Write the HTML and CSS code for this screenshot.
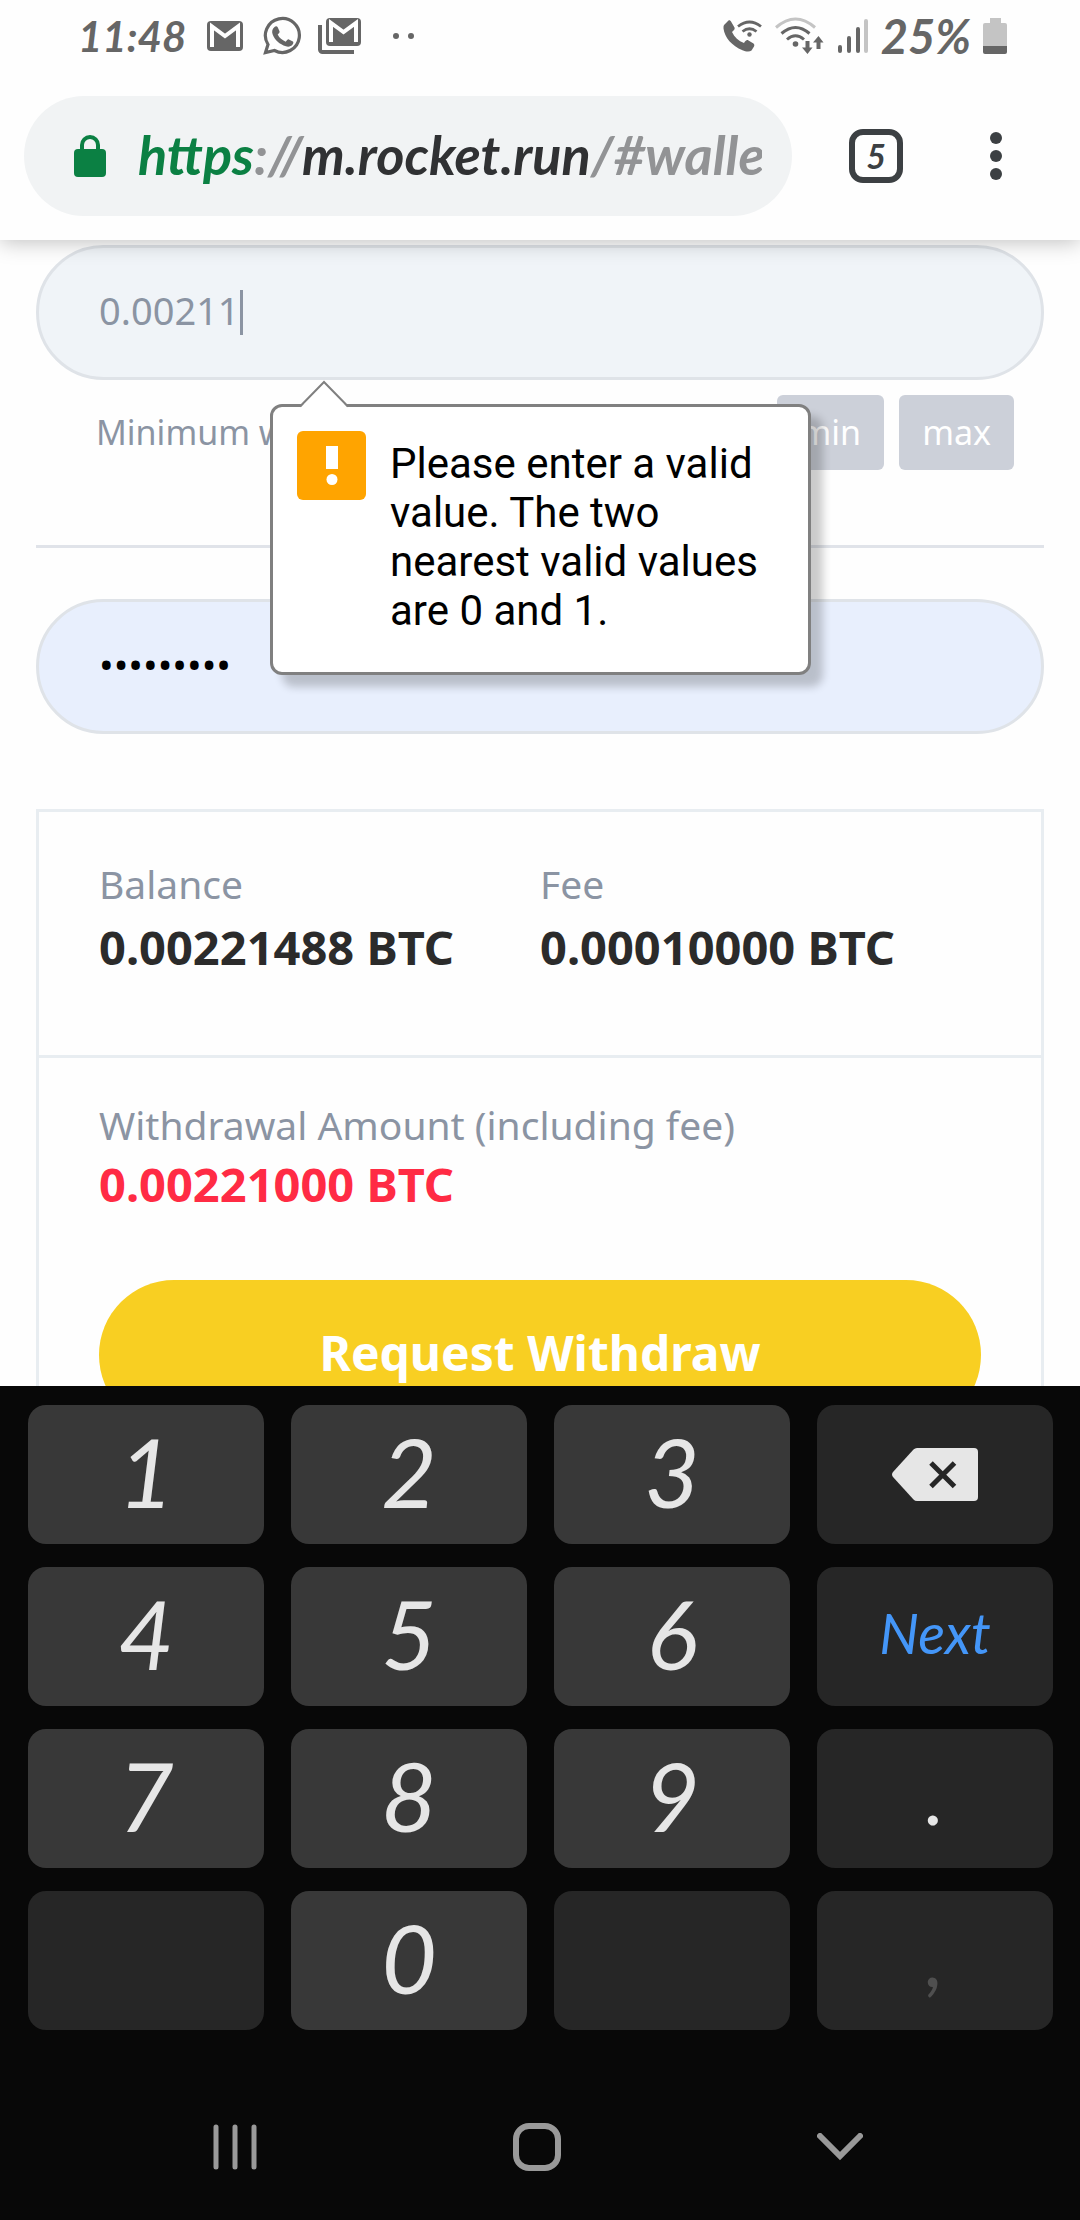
FILE: index.html
```html
<!DOCTYPE html>
<html lang="en">
<head>
<meta charset="utf-8">
<meta name="viewport" content="width=device-width, initial-scale=1">
<title>Wallet – Withdraw</title>
<link rel="stylesheet" href="styles.css">
</head>
<body>
<header class="top">
  <div class="status">
    <div class="status-left">
      <span class="clock">11:48</span>
      <svg class="icon-mail" width="36" height="30" viewBox="0 0 36 30"><rect width="36" height="30" rx="4" fill="#666"/><path d="M5 26V5.500L18 15 31 5.500V26" fill="none" stroke="#fff" stroke-width="4"/></svg>
      <svg class="icon-chat" width="40" height="40" viewBox="0 0 40 40"><path d="M3.500 36.500 6 28.500A17 17 0 1 1 12.500 34.500Z" fill="none" stroke="#666" stroke-width="3.200"/><path d="M12.500 11c1-.8 2.500-1 3.200.3l1.800 4c.3 1-.2 1.700-1.800 3.300 1.700 3.500 4.400 5.600 8 7.100 1.500-1.800 2-2.700 3.200-2.300l4 2c.8.5.5 2-.3 3.200-1.500 2-4.300 2.500-6.700 1.700C17.500 28.200 13 24.500 10.600 18.300c-1-2.800-.3-5.700 1.900-7.300Z" fill="#666"/></svg>
      <svg class="icon-mails" width="43" height="36" viewBox="0 0 43 36"><path d="M2 7v24.500a2.500 2.500 0 0 0 2.500 2.500H36" fill="none" stroke="#666" stroke-width="4"/><rect x="8" width="35" height="28" rx="4" fill="#666"/><path d="M13 24V5l12.500 9L38 5v19" fill="none" stroke="#fff" stroke-width="4"/></svg>
      <svg class="icon-more" width="22" height="6" viewBox="0 0 22 6"><circle cx="3" cy="3" r="3" fill="#666"/><circle cx="18" cy="3" r="3" fill="#666"/></svg>
    </div>
    <div class="status-right">
      <svg width="40" height="34" viewBox="0 0 40 34"><path d="M1 6 5.500 1.500c1-.8 2 0 2.500 1l3.500 6c.5 1.500 0 2-2.500 4.500 2.500 5.500 6.500 9 12 11 2-3 3-3.500 4.500-2.500l5 3c1 1 1 2 .5 3l-2.500 4c-2 1.500-6 1-9-.3C9 27 1.500 18.500.5 9.500Q.3 7 1 6Z" fill="#666"/><g fill="none" stroke="#666" stroke-width="2.800"><path d="M15 7.500q11.500-9 23 0M19.500 12.500q7-5.500 14 0"/></g><circle cx="26.500" cy="15.500" r="2.200" fill="#666"/></svg>
      <svg width="50" height="38" viewBox="0 0 50 38"><g fill="none" stroke-width="3"><path d="M1 10.500q19.500-17 39 0" stroke="#c4c4c4"/><path d="M6.500 16.500q14-12 28 0M12 22.500q8.500-7.500 17 0" stroke="#666"/></g><circle cx="20.500" cy="27" r="2.800" fill="#666"/><path d="M30.500 24h4v6.500h3L32.500 37 27 30.500h3.500ZM41.500 32h4v-6.500h3L43.500 19 38 25.500h3.500Z" fill="#666"/></svg>
      <svg width="32" height="36" viewBox="0 0 32 36"><g stroke-width="4" stroke-linecap="round" stroke="#666"><path d="M3 29v4M12 20v13M21 11v22"/><path d="M29 3v30" stroke="#c4c4c4"/></g></svg>
      <span class="percent">25%</span>
      <svg width="24" height="36" viewBox="0 0 24 36"><path d="M7 0h11v5h4a2 2 0 0 1 2 2v21H0V7a2 2 0 0 1 2-2h5Z" fill="#c4c4c4"/><path d="M0 28h24v6a2 2 0 0 1-2 2H2a2 2 0 0 1-2-2Z" fill="#666"/></svg>
    </div>
  </div>
  <div class="toolbar">
    <a class="address" href="#wallet">
      <svg width="32" height="42" viewBox="0 0 32 42"><rect y="14" width="32" height="28" rx="4" fill="#0b8043"/><path d="M8 16v-6a8 8 0 0 1 16 0v6" fill="none" stroke="#0b8043" stroke-width="4"/></svg>
      <span class="url"><span class="scheme">https</span>://<span class="host">m.rocket.run</span>/#wallet</span>
    </a>
    <button class="tabs" type="button" aria-label="Open tabs">5</button>
    <button class="menu" type="button" aria-label="Menu"><svg width="12" height="48" viewBox="0 0 12 48"><g fill="#3c4043"><circle cx="6" cy="6" r="6"/><circle cx="6" cy="24" r="6"/><circle cx="6" cy="42" r="6"/></g></svg></button>
  </div>
</header>

<main class="page">
  <div class="amount">
    <div class="field">
      <input class="field-input amount-input" type="text" inputmode="decimal" value="0.00211" aria-label="Amount"><span class="caret"></span>
    </div>
    <div class="limits">
      <span class="hint">Minimum withdrawal</span>
      <button class="chip" type="button">min</button>
      <button class="chip" type="button">max</button>
    </div>
    <div class="bubble" role="alert">
      <svg class="bubble-arrow" width="50" height="28" viewBox="0 0 50 28"><path d="M1 28 25 2l24 26Z" fill="#fff"/><path d="M1 26.500 25 2l24 24.500" fill="none" stroke="#808080" stroke-width="2"/></svg>
      <svg class="bubble-icon" width="69" height="69" viewBox="0 0 69 69"><rect width="69" height="69" rx="6" fill="#ffa400"/><path d="M29 15h12v23H29Z" fill="#fff"/><circle cx="35" cy="48.500" r="5.500" fill="#fff"/></svg>
      <p class="bubble-text">Please enter a valid value. The two nearest valid values are 0 and 1.</p>
    </div>
  </div>
  <hr class="rule">
  <div class="field field-filled">
    <input class="field-input password" type="password" value="password1" aria-label="Password">
  </div>
  <section class="card">
    <dl class="card-row">
      <div><dt class="label">Balance</dt><dd class="value">0.00221488 BTC</dd></div>
      <div><dt class="label">Fee</dt><dd class="value">0.00010000 BTC</dd></div>
    </dl>
    <div class="card-total">
      <div class="label">Withdrawal Amount (including fee)</div>
      <div class="value value-alert">0.00221000 BTC</div>
      <button class="submit" type="button">Request Withdraw</button>
    </div>
  </section>
</main>

<footer class="dock">
  <div class="keypad">
    <button class="key" type="button">1</button>
    <button class="key" type="button">2</button>
    <button class="key" type="button">3</button>
    <button class="key key-dark key-icon" type="button" aria-label="Backspace"><svg width="86" height="53" viewBox="0 0 86 53"><path d="M25 0h57a4 4 0 0 1 4 4v45a4 4 0 0 1-4 4H25q-2 0-3.500-1.500L1 29q-2-2.500 0-5L21.500 1.500Q23 0 25 0Z" fill="#e6e6e6"/><path d="m39 15 23.500 23.500m0-23.500L39 38.500" stroke="#262626" stroke-width="5"/></svg></button>
    <button class="key" type="button">4</button>
    <button class="key" type="button">5</button>
    <button class="key" type="button">6</button>
    <button class="key key-dark key-next" type="button">Next</button>
    <button class="key" type="button">7</button>
    <button class="key" type="button">8</button>
    <button class="key" type="button">9</button>
    <button class="key key-dark key-sign" type="button">.</button>
    <button class="key key-dark" type="button" aria-label="Blank"></button>
    <button class="key" type="button">0</button>
    <button class="key key-dark" type="button" aria-label="Blank"></button>
    <button class="key key-dark key-sign key-off" type="button" disabled>,</button>
  </div>
  <nav class="nav">
    <button class="nav-button" type="button" aria-label="Recent apps"><svg width="44" height="46" viewBox="0 0 44 46"><path d="M3 3v40M22 3v40M41 3v40" stroke="#999" stroke-width="5" stroke-linecap="round"/></svg></button>
    <button class="nav-button" type="button" aria-label="Home"><svg width="48" height="48" viewBox="0 0 48 48"><rect x="3" y="3" width="42" height="42" rx="13" fill="none" stroke="#999" stroke-width="6"/></svg></button>
    <button class="nav-button" type="button" aria-label="Hide keyboard"><svg width="46" height="28" viewBox="0 0 46 28"><path d="m3 3 20 20L43 3" fill="none" stroke="#999" stroke-width="6" stroke-linecap="round"/></svg></button>
  </nav>
</footer>
</body>
</html>
```
FILE: styles.css
```css
* { box-sizing: border-box; }

body {
  margin: 0;
  height: 100vh;
  display: flex;
  flex-direction: column;
  overflow: hidden;
  background: #fefefe;
  font-family: "Noto Sans", sans-serif;
}

button {
  border: 0;
  padding: 0;
  background: none;
  font: inherit;
}

svg { display: block; flex: none; }

/* Status bar and browser toolbar */
.top {
  flex: none;
  position: relative;
  z-index: 2;
  background: #fefefe;
  box-shadow: 0 2px 20px rgba(0, 0, 0, .25);
  font-family: Lato, sans-serif;
  font-style: italic;
}

.status {
  height: 72px;
  padding: 0 73px 0 78px;
  display: flex;
  justify-content: space-between;
  color: #666;
  font-size: 42px;
  font-weight: bold;
  line-height: 72px;
}

.status-left, .status-right { display: flex; align-items: center; }
.status-right { gap: 12px; }
.clock { margin-right: 21px; }
.percent { font-size: 47px; }
.icon-mail { margin-right: 19px; }
.icon-chat { margin-right: 16px; }
.icon-mails { margin-right: 32px; }

.toolbar {
  height: 168px;
  padding: 24px 60px 24px 24px;
  display: flex;
  align-items: center;
}

.address {
  flex: 1;
  min-width: 0;
  height: 120px;
  padding: 0 30px 0 50px;
  display: flex;
  align-items: center;
  gap: 32px;
  border-radius: 60px;
  background: #f1f3f4;
  color: #929395;
  font-size: 54px;
  font-weight: bold;
  text-decoration: none;
}

.url { flex: 1; overflow: hidden; white-space: nowrap; padding-bottom: 4px; }
.scheme { color: #0b8043; }
.host { color: #303133; }

.tabs {
  width: 54px;
  height: 54px;
  margin-left: 57px;
  border: 6px solid #3c4043;
  border-radius: 14px;
  color: #3c4043;
  font-size: 34px;
  font-weight: bold;
  line-height: 40px;
}

.menu { width: 48px; margin-left: 69px; display: flex; justify-content: center; }

/* Withdraw form */
.page {
  flex: 1;
  min-height: 0;
  overflow: hidden;
  padding: 5px 36px 0;
}

.amount { position: relative; }

.field {
  height: 135px;
  padding: 0 60px;
  display: flex;
  align-items: center;
  border: 3px solid #dfe3e8;
  border-radius: 68px;
  background: #f0f4f8;
}

.field-filled { background: #e8effd; }

.field-input {
  border: 0;
  padding: 0 0 6px;
  outline: 0;
  background: none;
  color: #8b94a3;
  font: 38px/52px "Noto Sans", sans-serif;
}

.amount-input { field-sizing: content; }
.password { flex: 1; color: #000; font-size: 39px; }
.caret { width: 3px; height: 45px; background: #8b94a3; }

.limits {
  margin-top: 15px;
  padding: 0 30px 0 60px;
  display: flex;
  align-items: center;
  gap: 15px;
  font-size: 34px;
}

.hint { flex: 1; padding-bottom: 2px; color: #8b94a3; }

.chip {
  height: 75px;
  padding: 0 23px 2px;
  border-radius: 6px;
  background: #ccd0d9;
  color: #fff;
}

.bubble {
  position: absolute;
  top: 159px;
  left: 234px;
  width: 541px;
  padding: 24px;
  display: flex;
  gap: 24px;
  border: 3px solid #808080;
  border-radius: 12px;
  background: #fff;
  box-shadow: 12px 12px 8px rgba(0, 0, 0, .2);
}

.bubble-arrow { position: absolute; top: -27px; left: 26px; }

.bubble-text {
  margin: 8px 0 13px;
  color: #000;
  font: 42px/49px Roboto, sans-serif;
}

.rule { margin: 75px 0 51px; border: 0; height: 3px; background: #e0e3e9; }

.card { margin-top: 75px; border: 3px solid #e8edf1; }

.card-row {
  margin: 0;
  padding: 44px 60px 76px;
  display: grid;
  grid-template-columns: 1fr 1fr;
  border-bottom: 3px solid #e8edf1;
}

.label { color: #8b94a3; font-size: 39px; line-height: 55px; }

.value {
  margin: 0;
  color: #2b2b2b;
  font-size: 47px;
  font-weight: bold;
  line-height: 64px;
}

.card-row .value { margin-top: 4px; }
.card-total { padding: 39px 60px 60px; }
.value-alert { color: #ff2b44; }

.submit {
  width: 100%;
  height: 150px;
  margin-top: 64px;
  padding-bottom: 5px;
  border-radius: 75px;
  background: #f8cf22;
  color: #fff;
  font-size: 48px;
  font-weight: bold;
}

/* Numeric keyboard and navigation bar */
.dock {
  flex: none;
  position: relative;
  z-index: 1;
  background: #080808;
}

.keypad {
  padding: 19px 27px 0 28px;
  display: grid;
  grid-template-columns: repeat(4, 1fr);
  grid-auto-rows: 139px;
  gap: 23px 27px;
}

.key {
  padding-bottom: 8px;
  display: flex;
  align-items: center;
  justify-content: center;
  border-radius: 18px;
  background: #383838;
  color: #e6e6e6;
  font: italic 96px/131px Lato, sans-serif;
}

.key-dark { background: #262626; }
.key-icon { padding-bottom: 0; }
.key-next { color: #4496f8; font-size: 56px; }
.key-sign { font-size: 80px; }
.key-off { color: #4f4f4f; }

.nav {
  height: 190px;
  padding: 44px 89px 0 84px;
  display: grid;
  grid-template-columns: repeat(3, 1fr);
  align-items: start;
}

.nav-button {
  height: 146px;
  display: flex;
  align-items: center;
  justify-content: center;
}
```
